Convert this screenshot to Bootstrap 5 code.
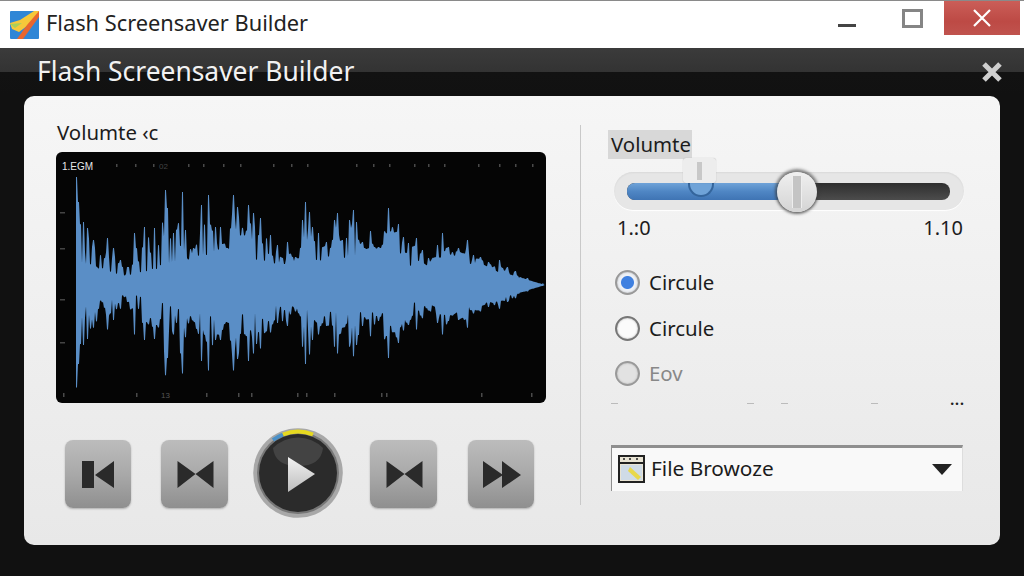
<!DOCTYPE html>
<html lang="en">
<head>
    <meta charset="UTF-8">
    <title>Flash Screensaver Builder</title>
    <link href="https://cdn.jsdelivr.net/npm/bootstrap@5.3.0/dist/css/bootstrap.min.css" rel="stylesheet">
    <style>
        html, body { height: 576px; overflow: hidden; }
        body { background: #111; font-family: "Noto Sans", "Liberation Sans", sans-serif; color: #1c1c1c; }

        /* window chrome */
        .win-bar { height: 48px; background: #fff; border-top: 1px solid #8a8a8a; padding-left: 10px; }
        .win-title { font-size: 21.8px; margin-left: 7px; color: #222; line-height: 1; margin-top: -3px; }
        .win-min { width: 18px; height: 3px; background: #444; margin-right: 46px; margin-top: 1px; }
        .win-max { width: 21px; height: 19px; border: 3px solid #858585; margin-right: 21px; margin-top: -13px; }
        .win-close { width: 76px; height: 34px; margin-right: 4px; margin-top: -13px; background: linear-gradient(#cb5e58, #bd4a45 60%, #c0534e); }

        .dlg-head { height: 48px; background: linear-gradient(#3b3b3b 0, #333 50%, #121212 50%, #111 100%); padding: 0 21px 0 37px; }
        .dlg-title { font-size: 26.4px; color: #f2f2f2; line-height: 1; margin-top: -2px; }

        /* main panel */
        .main-panel { height: 449px; margin: 0 24px; background: linear-gradient(#f6f6f6, #e8e8e8); border-radius: 10px; }
        .left-side { width: 556px; padding: 25px 0 0 32px; }
        .right-side { padding: 34px 0 0 27px; width: 384px; }
        .v-rule { width: 1px; height: 380px; margin-top: 29px; background: #c9c9c9; }

        .side-label { font-size: 20.4px; line-height: 24px; height: 24px; padding-left: 1px; margin-top: -1px; }
        .wave-box { display: block; width: 490px; height: 251px; margin-top: 8px; background: #050505; border-radius: 6px; }

        .transport { margin-top: 26px; height: 90px; padding-left: 9px; }
        .tp-btn { width: 66px; height: 68px; padding: 0; border: 0; border-radius: 8px; background: linear-gradient(#bcbcbc, #a9a9a9 50%, #8f8f8f); box-shadow: 0 1px 2px rgba(0,0,0,.25); }
        .tp-btn svg { display: block; }
        .tp-2 { margin-left: 30px; width: 67px; }
        .tp-3 { margin-left: 25px; }
        .tp-4 { margin-left: 27px; width: 67px; }
        .tp-5 { margin-left: 31px; }
        .play-btn { width: 90px; height: 90px; padding: 0; border: 0; background: none; margin-top: -2px; }
        .play-btn svg { display: block; }

        /* volume */
        .vol-tag { display: inline-block; background: #d8d8d8; font-size: 20.4px; line-height: 29px; height: 29px; padding: 0 3px; width: 84px; white-space: nowrap; }
        .slider-wrap { width: 350px; height: 38px; margin: 13px 0 0 6px; background: #e6e6e6; border-radius: 19px; box-shadow: inset 0 1px 2px rgba(0,0,0,.06), 0 1px 1px #fff; padding: 11px 14px 11px 13px; }
        .slider-track { height: 17px; border-radius: 8px; overflow: hidden; background: linear-gradient(#2e2e2e, #4c4c4c); }
        .slider-fill { height: 100%; background: linear-gradient(#6fa3d8, #4f86c4 50%, #3f74b4); }
        .knob-big { left: 150px; top: -11px; width: 40px; height: 40px; border-radius: 50%; background: linear-gradient(#f0f0f0, #d4d4d4); box-shadow: 0 -1px 3px 2px rgba(60,60,60,.6), 0 2px 3px rgba(60,60,60,.5); }
        .knob-big::after { content: ""; position: absolute; left: 15px; top: 4px; width: 10px; height: 32px; background: #c4c4c4; border-left: 1px solid #eee; border-right: 1px solid #eee; }
        .knob-small { left: 56px; top: -25px; width: 33px; height: 25px; background: #ededed; border-radius: 3px; box-shadow: 0 0 1px rgba(0,0,0,.3); }
        .knob-small::after { content: ""; position: absolute; left: 14px; top: 4px; width: 5px; height: 18px; background: #c8c8c8; }
        .knob-bump { left: 61px; top: 0; width: 26px; height: 14px; border-radius: 0 0 13px 13px; border: 2px solid #34659c; border-top: 0; background: #6fa3d8; }
        .scale-row { width: 346px; margin: 6px 0 0 9px; font-size: 20px; line-height: 24px; }

        /* radios */
        .opt-list { margin: 30px 0 0 7px; }
        .opt-row { display: flex; align-items: center; gap: 9px; min-height: 0; height: 25px; margin: 0 0 20.5px; padding: 0; font-size: 20.4px; }
        .opt-row .form-check-input { float: none; width: 25px; height: 25px; margin: 0; background: #fbfbfb; border: 2px solid #777; box-shadow: inset 0 0 2px #aaa, 0 0 1px #fff; }
        .opt-row .form-check-input:checked { background: radial-gradient(circle, #3f80e0 0 6px, #eef1f6 7px); border-color: #999; }
        .opt-row .form-check-input:disabled { opacity: 1; background: #e2e2e2; border-color: #999; }
        .opt-row .form-check-input:disabled ~ .form-check-label { opacity: 1; color: #888; }
        .dash-row { width: 354px; margin: -8px 0 0 3px; height: 10px; }
        .dash-row i { display: block; width: 7px; height: 1px; background: #bbb; }
        .dash-row i:nth-child(2) { margin-left: 129px; }
        .dash-row i:nth-child(3) { margin-left: 27px; }
        .dash-row i:nth-child(4) { margin-left: 83px; }
        .dash-row b { font-size: 14px; line-height: 8px; letter-spacing: 1px; font-weight: 700; color: #222; margin-top: -7px; }

        /* file picker */
        .file-pick { width: 352px; height: 46px; margin: 36px 0 0 3px; background: #f9f9f9; border-top: 3px solid #8f8f8f; border-left: 1px solid #8f8f8f; border-right: 1px solid #ddd; padding: 0 10px 0 6px; font-size: 20.8px; }
        .file-pick svg { margin-right: 6px; }
        .file-caret { width: 0; height: 0; border-left: 10px solid transparent; border-right: 10px solid transparent; border-top: 11px solid #222; }
    </style>
</head>
<body>
    <div class="win-bar d-flex align-items-center">
        <svg width="29" height="28" viewBox="0 0 29 28">
            <rect width="29" height="28" rx="1" fill="#2f86d6"/>
            <path d="M0 12 L10 9 L24 0 L29 0 L29 3 L17 15 L9 21 L2 18Z" fill="#f6c83a"/>
            <path d="M29 0 L29 6 L13 28 L7 28 L17 14Z" fill="#e8662f"/>
            <path d="M0 13 L12 12 L5 17Z" fill="#a8d05a"/>
        </svg>
        <div class="win-title">Flash Screensaver Builder</div>
        <div class="ms-auto win-min"></div>
        <div class="win-max"></div>
        <div class="win-close d-flex align-items-center justify-content-center">
            <svg width="18" height="18" viewBox="0 0 18 18"><path d="M1 1 L17 17 M17 1 L1 17" stroke="#fff" stroke-width="2.2"/></svg>
        </div>
    </div>

    <div class="dlg-head d-flex align-items-center justify-content-between">
        <div class="dlg-title">Flash Screensaver Builder</div>
        <svg width="22" height="22" viewBox="0 0 22 22"><path d="M3 3 L19 19 M19 3 L3 19" stroke="#cfcfcf" stroke-width="5"/></svg>
    </div>

    <div class="main-panel d-flex">
        <div class="left-side">
            <div class="side-label">Volumte ‹c</div>
            <svg class="wave-box" id="wave" viewBox="0 0 490 251"></svg>
            <div class="transport d-flex align-items-center">
                <button class="btn tp-btn" type="button"><svg width="66" height="68" viewBox="0 0 66 68"><path d="M17 21h12v27H17zM30 35 49 21v27z" fill="#2a2a2a"/></svg></button>
                <button class="btn tp-btn tp-2" type="button"><svg width="67" height="68" viewBox="0 0 66 68"><path d="M16 21 34 34 16 48zM52 21 34 34 52 48z" fill="#2a2a2a"/></svg></button>
                <button class="btn play-btn tp-3" type="button">
                    <svg width="90" height="90" viewBox="0 0 90 90">
                        <defs>
                            <linearGradient id="playFill" x1="0" y1="0" x2="0" y2="1"><stop offset="0" stop-color="#f2f2f2"/><stop offset="1" stop-color="#bdbdbd"/></linearGradient>
                        </defs>
                        <circle cx="45" cy="45" r="44.8" fill="#a8a8a8"/>
                        <circle cx="45" cy="45" r="41" fill="#777"/>
                        <circle cx="45" cy="45" r="39" fill="#2b2b2b"/>
                        <path d="M20 20 A35 35 0 0 1 70 20 Q68 38 45 38 Q22 38 20 20Z" fill="#434343"/>
                        <path d="M20 12 A41 41 0 0 1 30 6.5" fill="none" stroke="#4a90c8" stroke-width="4"/>
                        <path d="M30 6.5 A41 41 0 0 1 60 6.5" fill="none" stroke="#e6d920" stroke-width="4"/>
                        <path d="M35 29 L35 64 L62 46Z" fill="url(#playFill)"/>
                    </svg>
                </button>
                <button class="btn tp-btn tp-4" type="button"><svg width="67" height="68" viewBox="0 0 66 68"><path d="M16 21 34 34 16 48zM52 21 34 34 52 48z" fill="#2a2a2a"/></svg></button>
                <button class="btn tp-btn tp-5" type="button"><svg width="66" height="68" viewBox="0 0 66 68"><path d="M15 21 35 35 15 48zM34 21 53 35 34 48z" fill="#2a2a2a"/></svg></button>
            </div>
        </div>

        <div class="v-rule"></div>

        <div class="right-side">
            <div class="vol-tag">Volumte</div>
            <div class="slider-wrap">
                <div class="position-relative">
                    <div class="slider-track"><div class="slider-fill" style="width: 47%"></div></div>
                    <div class="knob-bump position-absolute"></div>
                    <div class="knob-big position-absolute"></div>
                    <div class="knob-small position-absolute"></div>
                </div>
            </div>
            <div class="scale-row d-flex justify-content-between"><span>1.:0</span><span>1.10</span></div>

            <div class="opt-list">
                <div class="form-check opt-row">
                    <input class="form-check-input" type="radio" name="shape" id="opt1" checked>
                    <label class="form-check-label" for="opt1">Circule</label>
                </div>
                <div class="form-check opt-row">
                    <input class="form-check-input" type="radio" name="shape" id="opt2">
                    <label class="form-check-label" for="opt2">Circule</label>
                </div>
                <div class="form-check opt-row">
                    <input class="form-check-input" type="radio" name="shape" id="opt3" disabled>
                    <label class="form-check-label" for="opt3">Eov</label>
                </div>
            </div>
            <div class="dash-row d-flex align-items-center">
                <i></i><i></i><i></i><i></i><b class="ms-auto">...</b>
            </div>

            <div class="file-pick d-flex align-items-center">
                <svg width="27" height="28" viewBox="0 0 27 28">
                    <rect x="1" y="1" width="25" height="26" fill="#e9e4d4" stroke="#222" stroke-width="2"/>
                    <path d="M1 8h25" stroke="#222" stroke-width="2"/>
                    <path d="M5 4h2M11 4h2M18 4h2" stroke="#222" stroke-width="1.5"/>
                    <path d="M3 10h21v15H3z" fill="#cfdbe6"/>
                    <path d="M12 12 L23 22 L20 25 L10 16Z" fill="#e8d84a"/>
                </svg>
                <span>File Browoze</span>
                <div class="file-caret ms-auto"></div>
            </div>
        </div>
    </div>

    <script>
        // waveform: measured peaks [x, top y] in page coords, the rest is seeded noise
        (function () {
            var peaks = [[76,177],[78,202],[83,222],[87,228],[93,240],[107,238],[113,248],[120,260],[127,267],[134,233],[144,227],[154,228],[165,190],[167,208],[173,233],[182,192],[185,230],[193,248],[201,205],[208,195],[215,227],[220,227],[227,248],[233,195],[237,207],[248,205],[253,213],[260,218],[270,235],[277,245],[287,242],[295,257],[302,220],[305,202],[309,212],[312,227],[318,233],[326,242],[334,220],[337,213],[342,240],[349,220],[353,210],[356,222],[362,242],[370,231],[378,247],[388,208],[398,224],[403,237],[408,243],[416,238],[422,250],[428,258],[437,245],[442,233],[448,247],[458,248],[467,240],[473,255],[480,257],[488,262],[499,260],[507,267],[515,271],[527,278]];
            var core = [[76,20],[83,20],[120,10],[127,8],[183,23],[217,33],[293,17],[300,20],[333,27],[387,27],[427,12],[443,30],[473,20],[500,12],[527,5],[545,0]];
            var seed = 17;
            function rnd() { seed = (seed * 16807) % 2147483647; return seed / 2147483647; }
            function lerp(list, x) {
                for (var i = 1; i < list.length; i++) {
                    if (x <= list[i][0]) {
                        var a = list[i - 1], b = list[i];
                        return a[1] + (b[1] - a[1]) * (x - a[0]) / (b[0] - a[0]);
                    }
                }
                return 0;
            }
            // most columns sit well up the envelope, with narrow dark notches back to the core
            function jitter(room) {
                var r = rnd();
                if (r < 0.22) return rnd() * 3;
                return (0.25 + rnd() * 0.55) * room;
            }
            var mid = 285, upper = [], lower = [], e1 = 0, e2 = 0;
            for (var x = 76; x <= 545; x++) {
                var c = lerp(core, x);
                var env = x > 527 ? (545 - x) * 0.38 : 285 - lerp(peaks, x);
                var room = Math.max(env - c, 0);
                if (x % 2 === 0 || x > 515) {
                    e1 = jitter(room);
                    e2 = jitter(room);
                }
                if (x > 515) { e1 *= 0.5; e2 *= 0.5; }
                upper.push([x, mid - c - e1]);
                lower.push([x, mid + c + e2]);
            }
            peaks.forEach(function (p) {
                var i = p[0] - 76, amp = 285 - p[1];
                [i, i + 1].forEach(function (k) {
                    if (upper[k]) {
                        upper[k][1] = Math.min(upper[k][1], mid - amp);
                        lower[k][1] = Math.max(lower[k][1], mid + amp * 0.95);
                    }
                });
            });
            var pts = upper.concat(lower.reverse()).map(function (p) { return (p[0] - 56) + ',' + (p[1] - 152).toFixed(1); }).join(' ');

            var svg = '<polygon points="' + pts + '" fill="#5a8ec6"/>';
            // tick marks along the top and bottom edges, and down the left
            [60,79,97,132,147,167,184,217,235,251,300,317,333,358,372,388,422,443,459,476,510,525].forEach(function (x) {
                svg += '<rect x="' + x + '" y="12" width="1.5" height="3" fill="#4a4a4a"/>';
            });
            [7,80,150,182,195,241,250,278,325,330,425,475,504,527].forEach(function (x) {
                svg += '<rect x="' + x + '" y="241" width="1.5" height="4" fill="#4a4a4a"/>';
            });
            [60,96,147,190].forEach(function (y) {
                svg += '<rect x="4" y="' + y + '" width="5" height="1.5" fill="#444"/>';
            });
            svg += '<text x="6" y="18" font-size="10" fill="#e8e8e8" font-family="Liberation Sans, sans-serif">1.EGM</text>';
            svg += '<text x="103" y="17" font-size="8" fill="#444" font-family="Liberation Sans, sans-serif">02</text>';
            svg += '<text x="105" y="246" font-size="8" fill="#555" font-family="Liberation Sans, sans-serif">13</text>';
            document.getElementById('wave').innerHTML = svg;
        })();
    </script>
    <script src="https://cdn.jsdelivr.net/npm/bootstrap@5.3.0/dist/js/bootstrap.bundle.min.js"></script>
</body>
</html>
